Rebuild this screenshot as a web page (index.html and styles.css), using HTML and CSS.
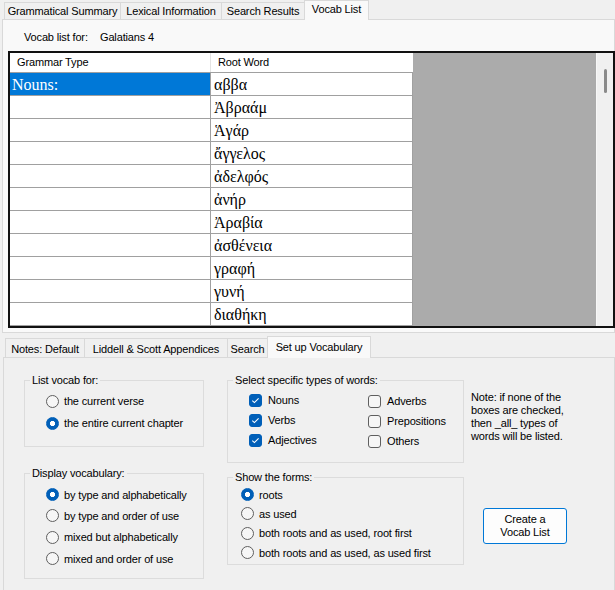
FILE: index.html
```html
<!DOCTYPE html>
<html>
<head>
<meta charset="utf-8">
<link rel="stylesheet" href="styles.css">
</head>
<body>
<div class="tabctl tabctl-top">
  <div class="tabstrip">
    <div class="tab tt1">Grammatical Summary</div>
    <div class="tab tt2">Lexical Information</div>
    <div class="tab tt3">Search Results</div>
    <div class="tab tt4 sel">Vocab List</div>
  </div>
  <div class="page toppage">
    <div class="vfor"><span class="vfor-label">Vocab list for:</span><span>Galatians 4</span></div>
    <div class="grid">
      <div class="table">
        <div class="row hdr"><div class="c1">Grammar Type</div><div class="c2">Root Word</div></div>
        <div class="row"><div class="c1 selcell">Nouns:</div><div class="c2">αββα</div></div>
        <div class="row"><div class="c1"></div><div class="c2">Ἀβραάμ</div></div>
        <div class="row"><div class="c1"></div><div class="c2">Ἁγάρ</div></div>
        <div class="row"><div class="c1"></div><div class="c2">ἄγγελος</div></div>
        <div class="row"><div class="c1"></div><div class="c2">ἀδελφός</div></div>
        <div class="row"><div class="c1"></div><div class="c2">ἀνήρ</div></div>
        <div class="row"><div class="c1"></div><div class="c2">Ἀραβία</div></div>
        <div class="row"><div class="c1"></div><div class="c2">ἀσθένεια</div></div>
        <div class="row"><div class="c1"></div><div class="c2">γραφή</div></div>
        <div class="row"><div class="c1"></div><div class="c2">γυνή</div></div>
        <div class="row"><div class="c1"></div><div class="c2">διαθήκη</div></div>
        <div class="row"><div class="c1"></div><div class="c2"></div></div>
      </div>
      <div class="empty"></div>
      <div class="vscroll"><div class="thumb"></div></div>
    </div>
  </div>
</div>
<div class="tabctl tabctl-bottom">
  <div class="tabstrip">
    <div class="tab bt1">Notes: Default</div>
    <div class="tab bt2">Liddell &amp; Scott Appendices</div>
    <div class="tab bt3">Search</div>
    <div class="tab bt4 sel">Set up Vocabulary</div>
  </div>
  <div class="page botpage">
    <div class="setup">
      <div class="col col-left">
        <fieldset class="grp g1">
          <legend>List vocab for:</legend>
          <div class="grp-body">
            <div class="opt"><span class="radio"></span>the current verse</div>
            <div class="opt"><span class="radio on"></span>the entire current chapter</div>
          </div>
        </fieldset>
        <fieldset class="grp g2">
          <legend>Display vocabulary:</legend>
          <div class="grp-body">
            <div class="opt"><span class="radio on"></span>by type and alphabetically</div>
            <div class="opt"><span class="radio"></span>by type and order of use</div>
            <div class="opt"><span class="radio"></span>mixed but alphabetically</div>
            <div class="opt"><span class="radio"></span>mixed and order of use</div>
          </div>
        </fieldset>
      </div>
      <div class="col col-mid">
        <fieldset class="grp g3">
          <legend>Select specific types of words:</legend>
          <div class="grp-body checks">
            <div class="chkcol chkcol1">
              <div class="opt"><span class="chk on"><svg width="13" height="13" viewBox="0 0 13 13"><path d="M3.3 6.6 L5.4 8.6 L9.6 4.4" fill="none" stroke="#fff" stroke-width="1.1"/></svg></span>Nouns</div>
              <div class="opt"><span class="chk on"><svg width="13" height="13" viewBox="0 0 13 13"><path d="M3.3 6.6 L5.4 8.6 L9.6 4.4" fill="none" stroke="#fff" stroke-width="1.1"/></svg></span>Verbs</div>
              <div class="opt"><span class="chk on"><svg width="13" height="13" viewBox="0 0 13 13"><path d="M3.3 6.6 L5.4 8.6 L9.6 4.4" fill="none" stroke="#fff" stroke-width="1.1"/></svg></span>Adjectives</div>
            </div>
            <div class="chkcol chkcol2">
              <div class="opt"><span class="chk"></span>Adverbs</div>
              <div class="opt"><span class="chk"></span>Prepositions</div>
              <div class="opt"><span class="chk"></span>Others</div>
            </div>
          </div>
        </fieldset>
        <fieldset class="grp g4">
          <legend>Show the forms:</legend>
          <div class="grp-body">
            <div class="opt"><span class="radio on"></span>roots</div>
            <div class="opt"><span class="radio"></span>as used</div>
            <div class="opt"><span class="radio"></span>both roots and as used, root first</div>
            <div class="opt"><span class="radio"></span>both roots and as used, as used first</div>
          </div>
        </fieldset>
      </div>
      <div class="col col-right">
        <div class="note">Note: if none of the<br>boxes are checked,<br>then _all_ types of<br>words will be listed.</div>
        <div class="btn">Create a<br>Vocab List</div>
      </div>
    </div>
  </div>
</div>
</body>
</html>
```
FILE: styles.css
```css
* { box-sizing: border-box; }
html, body { margin: 0; padding: 0; }
body {
  width: 615px;
  height: 590px;
  overflow: hidden;
  background: #f0f0f0;
  font-family: "Liberation Sans", Arial, sans-serif;
  font-size: 11px;
  letter-spacing: -0.15px;
  color: #000;
}

/* tab strips */
.tabstrip {
  display: flex;
  align-items: flex-end;
}
.tab {
  border: 1px solid #d9d9d9;
  border-bottom: none;
  margin-left: -1px;
  background: #f0f0f0;
  text-align: center;
  white-space: nowrap;
}
.tab.sel {
  position: relative;
  z-index: 1;
  margin-bottom: -1px;
  background: #f9f9f9;
}

.tabctl-top .tabstrip { height: 19px; padding-left: 4px; }
.tabctl-top .tab { height: 17px; line-height: 16px; }
.tabctl-top .tab.sel { height: 20px; line-height: 17px; }
.tt1 { width: 117px; margin-left: 0; }
.tt2 { width: 102px; }
.tt3 { width: 84px; }
.tt4 { width: 65px; }

.tabctl-bottom .tabstrip { height: 24px; padding-left: 5px; }
.tabctl-bottom .tab { height: 19px; padding-top: 2px; line-height: 16px; }
.tabctl-bottom .tab.sel { height: 22px; padding-top: 1px; line-height: 18px; }
.bt1 { width: 80px; margin-left: 0; }
.bt2 { width: 144px; }
.bt3 { width: 41px; }
.bt4 { width: 104px; }

/* pages */
.page {
  border: 1px solid #d9d9d9;
}
.toppage {
  width: 613px;
  height: 314px;
  margin-left: 2px;
  padding-top: 10px;
  background: #f9f9f9;
}
.botpage {
  width: 612px;
  height: 240px;
  margin-left: 3px;
  background: #f0f0f0;
}

/* vocab list header */
.vfor {
  height: 14px;
  line-height: 14px;
  padding-left: 21px;
  display: flex;
}
.vfor-label { width: 76px; }

/* grid */
.grid {
  display: flex;
  width: 607px;
  height: 277px;
  margin: 7px 0 0 5px;
  border: 2px solid #111;
}
.table {
  width: 403px;
  height: 100%;
  overflow: hidden;
  background: #fff;
}
.row {
  display: flex;
  height: 23px;
  border-bottom: 1px solid #a0a0a0;
}
.c1 {
  width: 201px;
  border-right: 1px solid #a0a0a0;
  padding-left: 2px;
}
.c2 {
  width: 202px;
  border-right: 1px solid #a0a0a0;
  padding-left: 3px;
}
.row .c1, .row .c2 {
  font-family: "Liberation Serif", "DejaVu Serif", serif;
  font-size: 16px;
  letter-spacing: 0;
  line-height: 22px;
  padding-top: 1px;
  white-space: nowrap;
}
.row.hdr { height: 20px; }
.row.hdr .c1, .row.hdr .c2 {
  font-family: "Liberation Sans", Arial, sans-serif;
  font-size: 11px;
  letter-spacing: -0.15px;
  line-height: 19px;
  padding-top: 0;
  padding-left: 7px;
}
.row.hdr .c1 { border-right-color: #e3e3e3; }
.row.hdr .c2 { border-right-color: #fff; }
.selcell {
  background: #0078d7;
  color: #fff;
}
.empty {
  flex: 1;
  background: #ababab;
}
.vscroll {
  width: 17px;
  border-left: 1px solid #f7f7f7;
  background: #f0f0f0;
}
.thumb {
  width: 3px;
  height: 24px;
  margin: 16px 0 0 7px;
  border-radius: 2px;
  background: #8a8a8a;
}

/* setup panel */
.setup {
  display: flex;
  padding: 15px 0 0 20px;
}
.col-left { width: 180px; }
.col-mid { width: 237px; margin-left: 23px; }
.col-right { margin-left: 7px; padding-top: 18px; }

.grp {
  margin: 0;
  min-inline-size: 0;
  border: 1px solid #dcdcdc;
  padding: 0;
}
.grp legend {
  padding: 0 2px;
  margin-left: 5px;
  line-height: 14px;
}
.opt {
  display: flex;
  align-items: center;
  white-space: nowrap;
}
.g1 .grp-body { padding: 3px 0 12px 21px; }
.g1 .opt { height: 22px; }
.g2 { margin-top: 19px; }
.g2 .grp-body { padding: 4px 0 9px 21px; }
.g2 .opt { height: 21.33px; }
.g3 .grp-body { padding: 3px 0 11px 21px; }
.g3 .opt { height: 20px; }
.g4 { margin-top: 7px; }
.g4 .grp-body { padding: 1px 0 2px 13px; }
.g4 .opt { height: 19.33px; }

.checks { display: flex; }
.chkcol1 { width: 119px; }
.chkcol2 { margin-top: 1px; }

.radio {
  width: 13px;
  height: 13px;
  margin-right: 5px;
  border-radius: 50%;
  border: 1px solid #5f5f5f;
  background: #f6f6f6;
  flex: none;
}
.radio.on {
  border-color: #005fb8;
  background: radial-gradient(circle at center, #fff 0 2.3px, #005fb8 2.9px);
}
.chk {
  width: 13px;
  height: 13px;
  margin-right: 6px;
  border-radius: 3px;
  border: 1px solid #5f5f5f;
  background: #f6f6f6;
  flex: none;
}
.chk svg { display: block; margin: -1px; }
.chk.on {
  border-color: #005fb8;
  background: #005fb8;
}

.note {
  line-height: 13px;
  white-space: nowrap;
}
.btn {
  width: 84px;
  height: 36px;
  margin: 65px 0 0 12px;
  border: 1px solid #0078d7;
  border-radius: 3px;
  background: #fdfdfd;
  text-align: center;
  line-height: 13px;
  padding-top: 4px;
}
```
